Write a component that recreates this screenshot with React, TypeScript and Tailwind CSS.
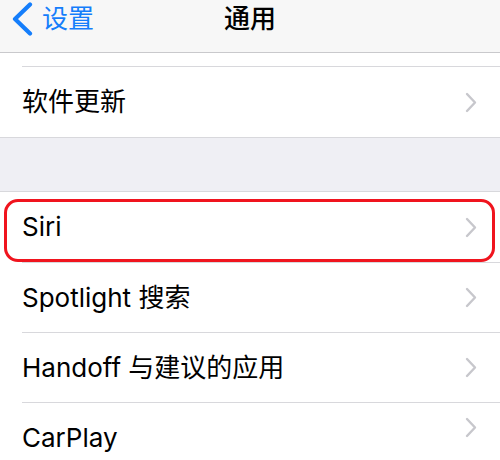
import React from 'react'

const FONT = { fontFamily: 'Inter, "Noto Sans CJK SC", sans-serif' }

function Chevron({ className = '' }: { className?: string }) {
  return (
    <svg width="12" height="21" viewBox="0 0 12 21" className={className} aria-hidden="true">
      <polyline points="2,2 10,10.5 2,19" fill="none" stroke="#c7c7cc" strokeWidth="2.4" strokeLinecap="round" strokeLinejoin="round" />
    </svg>
  )
}

function Row({ label, h = 'h-[69px]', chevronClass = '' }: { label: string; h?: string; chevronClass?: string }) {
  return (
    <div className={`flex items-center justify-between pl-[22px] pr-[23px] ${h}`}>
      <span className="text-[26px] text-black leading-none">{label}</span>
      <Chevron className={chevronClass} />
    </div>
  )
}

const Divider = () => (
  <div className="pl-[22px] bg-white">
    <div className="h-px bg-[#d8d8dc]" />
  </div>
)

export default function App() {
  return (
    <div className="w-[500px] h-[460px] overflow-hidden bg-white" style={FONT}>
      {/* Nav bar */}
      <header className="relative h-[53px] bg-[#f7f7f7] border-b border-[#c9c9cc]">
        <div className="flex items-center h-[37px] pl-[11px]">
          <svg width="23" height="34" viewBox="0 0 23 34" aria-hidden="true">
            <polyline points="19,2.5 4,17 19,31.5" fill="none" stroke="#157efb" strokeWidth="4.2" strokeLinecap="round" strokeLinejoin="round" />
          </svg>
          <span className="ml-[8px] text-[26px] text-[#157efb] leading-none">设置</span>
        </div>
        <div className="absolute inset-x-0 top-0 h-[37px] flex items-center justify-center">
          <span className="text-[26px] font-medium text-black leading-none">通用</span>
        </div>
      </header>

      {/* Section 1 */}
      <div className="h-[13px] bg-white" />
      <Divider />
      <div className="border-b border-[#d8d8dc]">
        <Row label="软件更新" h="h-[70px]" />
      </div>

      {/* Gap */}
      <div className="h-[54px] bg-[#efeff4] border-b border-[#d8d8dc]" />

      {/* Section 2 */}
      <div className="relative">
        <Row label="Siri" h="h-[70px]" />
        <div className="absolute left-[4px] right-[5px] top-[7px] h-[63px] rounded-[14px] border-[3px] border-[#f0141e]" />
      </div>
      <Divider />
      <Row label="Spotlight 搜索" />
      <Divider />
      <Row label="Handoff 与建议的应用" />
      <Divider />
      <Row label="CarPlay" h="h-[70px]" chevronClass="-translate-y-[11px]" />
    </div>
  )
}
